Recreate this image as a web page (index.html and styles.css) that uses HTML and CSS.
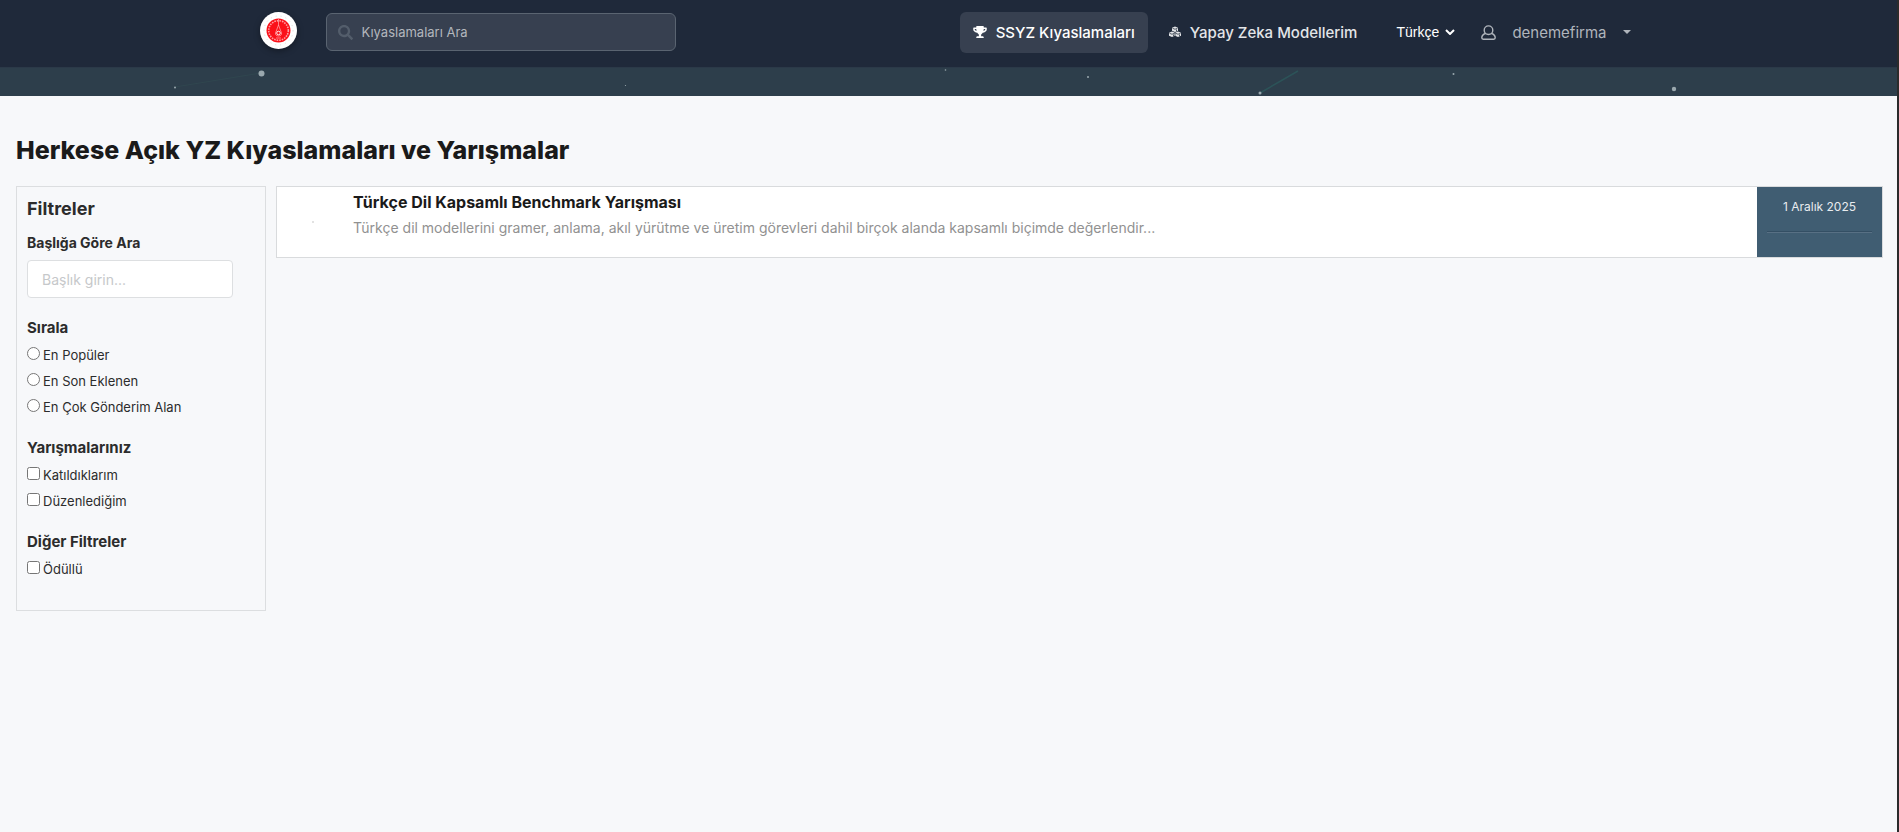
FILE: index.html
```html
<!DOCTYPE html>
<html lang="tr">
<head>
<meta charset="utf-8">
<title>SSYZ Kıyaslamaları</title>
<link rel="stylesheet" href="styles.css">
</head>
<body>
<header class="topbar">
  <div class="topbar-inner">
    <a class="logo" href="#" aria-label="Ana sayfa">
      <svg width="37" height="37" viewBox="0 0 37 37" aria-hidden="true">
        <circle cx="18.500" cy="18.500" r="18.500" fill="#fff"/>
        <circle cx="18.500" cy="18.500" r="14.500" fill="none" stroke="#dcdcdc" stroke-width="1" stroke-dasharray="1 4"/>
        <circle cx="18.500" cy="18.500" r="12" fill="#fb1019"/>
        <circle cx="18.500" cy="18.500" r="9.800" fill="none" stroke="#ff9ca0" stroke-width="1.600" stroke-dasharray="1.600 1"/>
        <path d="M18.500 7v7M18.500 13l-3 8c-.8 4 6.800 4 6 0zM16 26h5" fill="none" stroke="#ff9ca0" stroke-width=".8"/>
        <circle cx="18.500" cy="21" r="1.800" fill="#fb1019" stroke="#fff" stroke-width=".9"/>
      </svg>
    </a>
    <label class="search">
      <svg width="15" height="15" viewBox="0 0 512 512" aria-hidden="true"><path fill="#535d6b" d="M505 442.700L405.300 343c-4.500-4.500-10.600-7-17-7H372c27.600-35.300 44-79.700 44-128C416 93.100 322.900 0 208 0S0 93.100 0 208s93.100 208 208 208c48.300 0 92.700-16.400 128-44v16.300c0 6.400 2.500 12.500 7 17l99.700 99.700c9.400 9.400 24.600 9.400 33.900 0l28.300-28.300c9.400-9.400 9.400-24.600.1-34zM208 336c-70.700 0-128-57.200-128-128 0-70.700 57.200-128 128-128 70.700 0 128 57.200 128 128 0 70.700-57.200 128-128 128z"/></svg>
      <input class="search-input" type="search" placeholder="Kıyaslamaları Ara" aria-label="Kıyaslamaları Ara">
    </label>
    <nav class="nav">
      <a class="nav-link nav-link-active" href="#">
        <svg width="14" height="12" viewBox="0 0 576 512" aria-hidden="true"><path fill="currentColor" d="M552 64H448V24c0-13.300-10.700-24-24-24H152c-13.300 0-24 10.700-24 24v40H24C10.700 64 0 74.700 0 88v56c0 35.700 22.500 72.400 61.900 100.700 31.500 22.700 69.800 37.100 110 41.700C203.300 338.500 240 360 240 360v72h-48c-35.300 0-64 20.700-64 56v12c0 6.600 5.400 12 12 12h296c6.600 0 12-5.400 12-12v-12c0-35.300-28.700-56-64-56h-48v-72s36.700-21.500 68.100-73.600c40.300-4.600 78.600-19 110-41.700 39.300-28.300 61.900-65 61.900-100.700V88c0-13.300-10.700-24-24-24zM99.300 192.800C74.900 175.200 64 155.600 64 144v-16h64.200c1 32.600 5.800 61.200 12.800 86.200-15.100-5.200-29.200-12.400-41.700-21.400zM512 144c0 16.100-17.700 36.100-35.300 48.800-12.500 9-26.700 16.200-41.800 21.400 7-25 11.800-53.600 12.800-86.200H512v16z"/></svg>
        <span>SSYZ Kıyaslamaları</span>
      </a>
      <a class="nav-link" href="#">
        <svg width="12" height="12" viewBox="0 0 24 24" aria-hidden="true"><g fill="currentColor"><path d="M12 1l6 2.500v6L12 12 6 9.500v-6zM6 11l6 2.500v6L6 22l-6-2.500v-6zM18 11l6 2.500v6L18 22l-6-2.500v-6z"/></g><path d="M7 4.500l5 2 5-2M1 14.500l5 2 5-2M13 14.500l5 2 5-2M15 7v3M9 17v3.500M21 17v3.500M12 13v7" fill="none" stroke="#1f293a" stroke-width="1.500"/></svg>
        <span>Yapay Zeka Modellerim</span>
      </a>
    </nav>
    <div class="language">
      <select class="language-select" aria-label="Dil"><option>Türkçe</option></select>
      <svg class="language-arrow" width="10" height="6" viewBox="0 0 10 6" aria-hidden="true"><path d="M1 1l4 4 4-4" fill="none" stroke="#fff" stroke-width="2"/></svg>
    </div>
    <button class="account" type="button">
      <svg width="15" height="15" viewBox="0 0 15 15" aria-hidden="true"><g fill="none" stroke="currentColor" stroke-width="1.400"><circle cx="7.500" cy="5.200" r="4.300"/><path d="M4.500 8.500C2 9.300.8 10.800.8 12.800c0 1 .5 1.400 1.400 1.400h10.600c.9 0 1.400-.4 1.400-1.400 0-2-1.200-3.500-3.700-4.300"/></g></svg>
      <span class="account-name">denemefirma</span>
      <svg width="8" height="4" viewBox="0 0 8 4" aria-hidden="true"><path d="M0 0h8L4 4z" fill="currentColor"/></svg>
    </button>
  </div>
</header>
<div class="banner" aria-hidden="true">
  <svg class="banner-art" width="1897" height="29" viewBox="0 0 1897 29">
    <path d="M1260 26l38-22" stroke="#2c5358" stroke-width="1.500"/>
    <path d="M175 20l86-14" stroke="#30464f"/>
    <g fill="#9aa8ae"><circle cx="261.500" cy="6.500" r="3"/><circle cx="1674" cy="22" r="2.200"/><circle cx="1260" cy="26" r="1.500"/><circle cx="1088" cy="10" r="1"/><circle cx="1453.500" cy="7" r="1"/><circle cx="175" cy="20.500" r="1"/><circle cx="945.500" cy="3" r=".8"/><circle cx="625.500" cy="18.500" r=".6"/></g>
  </svg>
</div>
<main class="page">
  <h1 class="page-title">Herkese Açık YZ Kıyaslamaları ve Yarışmalar</h1>
  <div class="columns">
    <aside class="filters">
      <h2 class="filters-title">Filtreler</h2>
      <div class="group">
        <label class="field-label" for="title-search">Başlığa Göre Ara</label>
        <input class="title-input" id="title-search" type="text" placeholder="Başlık girin...">
      </div>
      <div class="group" role="radiogroup" aria-labelledby="sort-title">
        <h3 class="group-title" id="sort-title">Sırala</h3>
        <label class="option"><input class="option-input" type="radio" name="sort">En Popüler</label>
        <label class="option"><input class="option-input" type="radio" name="sort">En Son Eklenen</label>
        <label class="option"><input class="option-input" type="radio" name="sort">En Çok Gönderim Alan</label>
      </div>
      <div class="group">
        <h3 class="group-title">Yarışmalarınız</h3>
        <label class="option"><input class="option-input" type="checkbox">Katıldıklarım</label>
        <label class="option"><input class="option-input" type="checkbox">Düzenlediğim</label>
      </div>
      <div class="group">
        <h3 class="group-title">Diğer Filtreler</h3>
        <label class="option"><input class="option-input" type="checkbox">Ödüllü</label>
      </div>
    </aside>
    <section class="results">
      <article class="card">
        <div class="card-thumb"><span class="thumb-dot"></span></div>
        <div class="card-body">
          <h2 class="card-title">Türkçe Dil Kapsamlı Benchmark Yarışması</h2>
          <p class="card-text">Türkçe dil modellerini gramer, anlama, akıl yürütme ve üretim görevleri dahil birçok alanda kapsamlı biçimde değerlendir...</p>
        </div>
        <div class="card-date">
          <time datetime="2025-12-01">1 Aralık 2025</time>
          <hr class="date-rule">
        </div>
      </article>
    </section>
  </div>
</main>
</body>
</html>
```

FILE: styles.css
```css
* { box-sizing: border-box; }
body {
  margin: 0;
  min-height: 100vh;
  border-right: 2px solid #2b2b2b;
  background: #f7f8fa;
  color: #2c2c2c;
  font-family: Inter, "Open Sans", sans-serif;
  font-size: 13px;
}
h1, h2, h3, p { margin: 0; }
.topbar { background: #1f293a; border-bottom: 1px solid #2b3948; }
.topbar-inner {
  display: flex;
  align-items: center;
  max-width: 1400px;
  height: 67px;
  margin: 0 auto;
  padding: 0 18px 3px 11px;
}
.logo {
  display: flex;
  margin: 0 29px 4px 0;
  border-radius: 50%;
  box-shadow: 0 2px 6px rgba(0, 0, 0, .35);
}
.search {
  display: flex;
  align-items: center;
  gap: 9px;
  width: 350px;
  height: 38px;
  padding: 0 11px;
  border: 1px solid #5a6471;
  border-radius: 6px;
  background: #374050;
}
.search-input {
  flex: 1;
  min-width: 0;
  padding: 0;
  border: 0;
  outline: 0;
  background: transparent;
  color: #fff;
  font: 13px Inter, sans-serif;
}
.search-input::placeholder { color: #b3b7bd; opacity: 1; }
.nav { display: flex; gap: 8px; margin-left: auto; }
.nav-link {
  display: flex;
  align-items: center;
  gap: 9px;
  height: 41px;
  padding: 0 13px;
  border-radius: 6px;
  color: #e3e5e8;
  font-size: 15px;
  font-weight: 500;
  text-decoration: none;
}
.nav-link-active { background: #374050; color: #fff; }
.language { display: flex; align-items: center; gap: 6px; margin-left: 26px; }
.language-select {
  appearance: none;
  padding: 0;
  border: 0;
  background: transparent;
  color: #fff;
  font: 14px "Liberation Sans", sans-serif;
}
.account {
  display: flex;
  align-items: center;
  gap: 16px;
  margin-left: 26px;
  padding: 0;
  border: 0;
  background: transparent;
  color: #b0b5bc;
  font: 15px Inter, sans-serif;
}
.banner { height: 28px; overflow: hidden; background: #2d3e4b; }
.banner-art { display: block; margin-top: -1px; }
.page { padding: 34px 14px 32px 16px; }
.page-title { color: #1a1a1a; font-size: 25px; font-weight: 800; line-height: 40px; }
.columns {
  display: grid;
  grid-template-columns: 250px 1fr;
  gap: 10px;
  align-items: start;
  margin-top: 16px;
}
.filters { padding: 8px 10px 14px; border: 1px solid #dcdee0; }
.filters-title { margin-bottom: 6px; font-size: 18px; line-height: 28px; }
.group { margin-bottom: 14px; }
.group-title { font-size: 15px; font-weight: 700; line-height: 28px; }
.field-label { display: block; font-size: 14px; font-weight: 700; line-height: 28px; }
.title-input {
  display: block;
  width: 206px;
  height: 38px;
  margin: 3px 0 16px;
  padding: 0 14px;
  border: 1px solid #dddfe1;
  border-radius: 4px;
  background: #fff;
  font: 14px Inter, sans-serif;
}
.title-input::placeholder { color: #c6c8ca; opacity: 1; }
.option { display: flex; align-items: center; gap: 3px; height: 26px; }
.option-input { width: 13px; height: 13px; margin: 0 0 4px; }
.card {
  display: flex;
  min-height: 72px;
  border: 1px solid #d9dbdd;
  background: #fff;
}
.card-thumb { display: grid; place-items: center; width: 72px; }
.thumb-dot { width: 2px; height: 2px; background: #e2e2e2; }
.card-body { flex: 1; padding: 2px 4px; }
.card-title { color: #1a1a1a; font-size: 16px; line-height: 26px; }
.card-text { color: #919191; font-size: 14px; line-height: 26px; }
.card-date {
  width: 125px;
  padding: 10px;
  background: #405d72;
  color: #e8ecef;
  font-size: 12px;
  line-height: 20px;
  text-align: center;
}
.date-rule { margin: 14px 0 0; border: 0; border-top: 1px solid #344f64; border-bottom: 1px solid #587084; }
```
